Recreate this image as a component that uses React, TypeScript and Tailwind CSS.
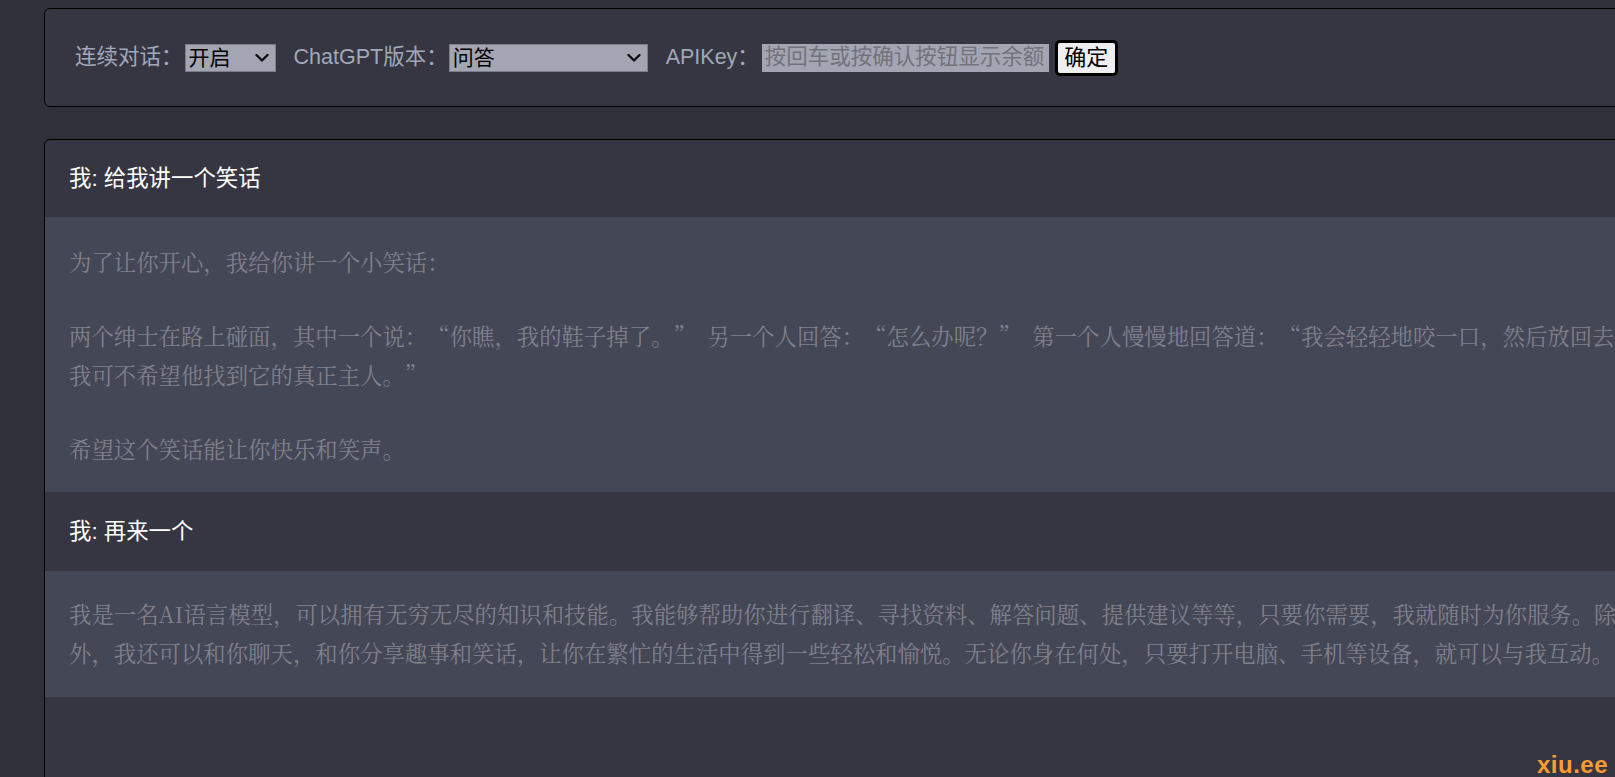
function Chevron() {
  return (
    <svg className="pointer-events-none absolute right-[7px] top-1/2 -translate-y-1/2" width="14" height="9" viewBox="0 0 14 9" fill="none">
      <path d="M1.5 1.5 L7 7 L12.5 1.5" stroke="#111" strokeWidth="2.4" strokeLinecap="round" strokeLinejoin="round" />
    </svg>
  );
}

function LQ() {
  return <span className="inline-block w-[1em] text-right">“</span>;
}
function RQ() {
  return <span className="inline-block w-[1em] text-left">”</span>;
}

export default function App() {
  const sans = { fontFamily: '"Liberation Sans", "Noto Sans CJK SC", sans-serif' };
  const serif = { fontFamily: '"Noto Serif CJK SC", "Liberation Serif", "Noto Sans CJK SC", serif' };
  return (
    <div className="relative w-screen h-screen overflow-hidden bg-[#30303b] pt-[8px] pl-[44px]" style={sans}>
      <div className="w-[1700px] h-[99px] rounded-md border border-black bg-[#363642] flex items-center pl-[30px] text-[21.5px] text-[#a0a8b9]">
        <span className="whitespace-nowrap">连续对话：</span>
        <div className="relative ml-[2px]">
          <select className="appearance-none block w-[91px] h-[28px] bg-[#a4a5b2] border border-[#7c7d88] text-black text-[21px] pl-[3px] leading-none" defaultValue="on">
            <option value="on">开启</option>
            <option value="off">关闭</option>
          </select>
          <Chevron />
        </div>
        <span className="ml-[18px] whitespace-nowrap">ChatGPT版本：</span>
        <div className="relative ml-[1px]">
          <select className="appearance-none block w-[199px] h-[28px] bg-[#a4a5b2] border border-[#7c7d88] text-black text-[21px] pl-[3px] leading-none" defaultValue="qa">
            <option value="qa">问答</option>
          </select>
          <Chevron />
        </div>
        <span className="ml-[18px] whitespace-nowrap">APIKey：</span>
        <input
          className="ml-[3px] w-[287px] h-[28px] bg-[#a4a5b2] border border-[#a4a5b2] text-black text-[21.5px] px-[2px] placeholder:text-[#72727c] outline-none"
          placeholder="按回车或按确认按钮显示余额"
        />
        <button className="ml-[6px] w-[63px] h-[36px] bg-[#efefef] border-[3px] border-black rounded-[5px] text-black text-[22px] leading-none">
          确定
        </button>
      </div>

      <div className="mt-[32px] w-[1700px] h-[700px] rounded-md border border-black bg-[#363642] overflow-hidden">
        <div className="h-[77px] flex items-center pl-[24px] text-white text-[22.4px]">我: 给我讲一个笑话</div>
        <div className="bg-[#444756] pl-[24px] pt-[25px] pb-[24px] text-[22.4px] leading-[39px] text-[#80808b]" style={serif}>
          <p className="whitespace-nowrap">为了让你开心，我给你讲一个小笑话：</p>
          <p className="mt-[35px] whitespace-nowrap">
            两个绅士在路上碰面，其中一个说：<LQ />你瞧，我的鞋子掉了。<RQ />&nbsp;&nbsp;另一个人回答：<LQ />怎么办呢？<RQ />&nbsp;&nbsp;第一个人慢慢地回答道：<LQ />我会轻轻地咬一口，然后放回去，
          </p>
          <p className="whitespace-nowrap">我可不希望他找到它的真正主人。<RQ /></p>
          <p className="mt-[35px] whitespace-nowrap">希望这个笑话能让你快乐和笑声。</p>
        </div>
        <div className="h-[79px] flex items-center pl-[24px] text-white text-[22.4px]">我: 再来一个</div>
        <div className="bg-[#444756] pl-[24px] pt-[23px] pb-[25px] text-[22.4px] leading-[39px] text-[#80808b]" style={serif}>
          <p className="whitespace-nowrap">我是一名AI语言模型，可以拥有无穷无尽的知识和技能。我能够帮助你进行翻译、寻找资料、解答问题、提供建议等等，只要你需要，我就随时为你服务。除此</p>
          <p className="whitespace-nowrap">外，我还可以和你聊天，和你分享趣事和笑话，让你在繁忙的生活中得到一些轻松和愉悦。无论你身在何处，只要打开电脑、手机等设备，就可以与我互动。</p>
        </div>
      </div>

      <div className="absolute right-[7px] bottom-0 text-[24px] font-bold text-[#ff9b2f] leading-none tracking-[0.5px]" style={{ fontFamily: '"Liberation Sans", Arial, sans-serif' }}>
        xiu.ee
      </div>
    </div>
  );
}
